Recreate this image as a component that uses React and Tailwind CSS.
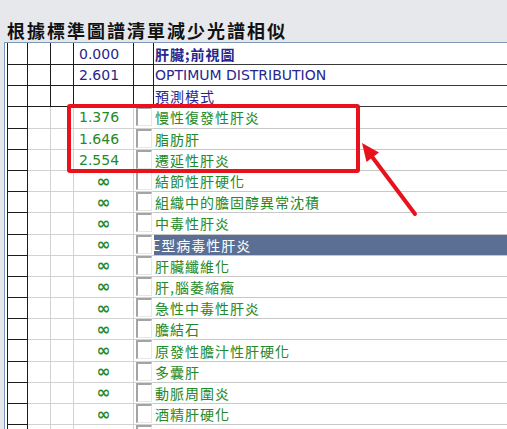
import React from 'react';

const rows = [
  { num: '0.000', name: '肝臟;前視圖', top: true, bold: true },
  { num: '2.601', name: 'OPTIMUM DISTRIBUTION', top: true, latin: true },
  { num: '', name: '預測模式', top: true },
  { num: '1.376', name: '慢性復發性肝炎' },
  { num: '1.646', name: '脂肪肝' },
  { num: '2.554', name: '遷延性肝炎' },
  { num: '∞', name: '結節性肝硬化' },
  { num: '∞', name: '組織中的膽固醇異常沈積' },
  { num: '∞', name: '中毒性肝炎' },
  { num: '∞', name: 'E型病毒性肝炎', selected: true },
  { num: '∞', name: '肝臟纖維化' },
  { num: '∞', name: '肝,腦萎縮癥' },
  { num: '∞', name: '急性中毒性肝炎' },
  { num: '∞', name: '膽結石' },
  { num: '∞', name: '原發性膽汁性肝硬化' },
  { num: '∞', name: '多囊肝' },
  { num: '∞', name: '動脈周圍炎' },
  { num: '∞', name: '酒精肝硬化' },
  { num: '', name: '' },
];

const cjk = "font-['Noto_Sans_CJK_TC','Noto_Sans_CJK_SC',sans-serif]";
const latin = "font-['DejaVu_Sans',sans-serif]";

function TopRow({ row, first }) {
  const h = first ? 'h-[22px]' : 'h-[21.2px]';
  return (
    <div className={`flex ${h} shrink-0`}>
      <div className="w-[21px] border-l border-r border-b border-[#1c1c1c]" />
      <div className="w-[23px] border-r border-b border-[#1c1c1c]" />
      <div className="w-[23px] border-r border-b border-[#1c1c1c]" />
      <div className={`w-[60px] border-r border-b border-[#1c1c1c] pl-[5px] flex items-center text-[14px] leading-[18px] text-[#26268e] ${latin}`}>
        {row.num}
      </div>
      <div className="w-[20px] border-r border-b border-[#1c1c1c]" />
      <div
        className={`flex-1 border-b border-[#3a3a3a] pl-[1px] flex items-center text-[#26268e] whitespace-nowrap overflow-hidden leading-[18px] ${
          row.latin ? `${latin} text-[14px]` : `${cjk} text-[14px] tracking-[1px]`
        } ${row.bold ? 'font-bold' : ''}`}
      >
        {row.name}
      </div>
    </div>
  );
}

function ListRow({ row }) {
  const isInf = row.num === '∞';
  return (
    <div className="flex h-[21.2px] shrink-0">
      <div className="w-[21px] border-l border-r border-b border-[#1c1c1c]" />
      <div className="w-[23px] border-r border-b border-[#d2d2d2]" />
      <div className="w-[23px] border-r border-b border-[#d2d2d2]" />
      <div
        className={`w-[60px] border-r border-b border-[#d2d2d2] flex items-center text-[#23892a] ${latin} ${
          isInf ? 'justify-center text-[17px] leading-[17px] font-bold' : 'pl-[5px] text-[14px] leading-[18px]'
        }`}
      >
        {row.num}
      </div>
      <div className="w-[20px] border-b border-[#d2d2d2] pl-[2px] flex items-start">
        <div className="w-[16px] h-[19px] bg-white border-l-2 border-t-2 border-[#a4a4a4] border-r border-b border-r-[#e6e6e6] border-b-[#e6e6e6]" />
      </div>
      <div
        className={`flex-1 border-b border-[#c8c8c8] flex items-center whitespace-nowrap overflow-hidden leading-[18px] ${cjk} text-[14px] tracking-[1px] ${
          row.selected ? 'bg-[#5b6f94] text-white' : 'text-[#23892a] pl-[1px]'
        }`}
      >
        <span className={row.selected ? '-ml-[2px]' : ''}>{row.name}</span>
      </div>
    </div>
  );
}

export default function App() {
  return (
    <div className="relative w-[507px] h-[429px] overflow-hidden bg-[#e7e8ec]">
      <div className={`h-[42px] pl-[7px] pt-[19px] leading-[22px] text-[18px] font-bold tracking-[2px] text-[#111] ${cjk}`}>
        根據標準圖譜清單減少光譜相似
      </div>

      <div className="ml-[4px] border-l border-t border-[#7d98b8] bg-white pl-[2px] flex flex-col h-[400px]">
        {rows.map((row, i) =>
          row.top ? <TopRow key={i} row={row} first={i === 0} /> : <ListRow key={i} row={row} />
        )}
      </div>

      {/* red highlight box */}
      <div className="absolute left-[67px] top-[104px] w-[293px] h-[69px] border-[4px] border-[#e8121c] rounded-[3px]" />

      {/* arrow */}
      <svg className="absolute left-0 top-0" width="507" height="429" viewBox="0 0 507 429">
        <line x1="415" y1="214" x2="370" y2="154" stroke="#e8121c" strokeWidth="4" strokeLinecap="round" />
        <polygon points="362,143 379,152.5 366.5,162" fill="#e8121c" />
      </svg>
    </div>
  );
}
